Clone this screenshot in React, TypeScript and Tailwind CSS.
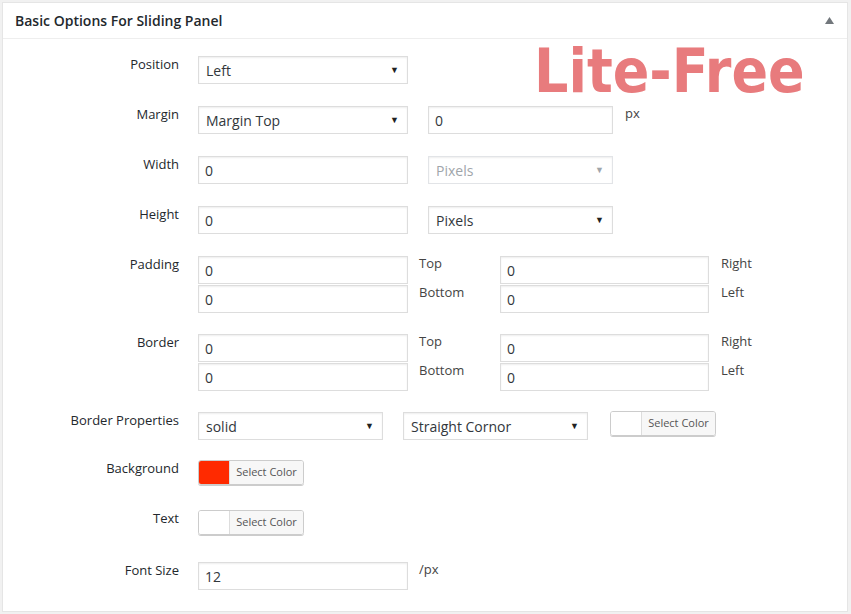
import React from 'react';

const font = { fontFamily: '"Open Sans", "Noto Sans", sans-serif' };

// ── small controls ────────────────────────────────────────────────────────────
function Select({ value, width, disabled }: { value: string; width: string; disabled?: boolean }) {
  return (
    <div
      className={`${width} h-[28px] flex items-center justify-between pl-[7px] pr-[8px] border bg-white text-[14px] shadow-[inset_0_1px_2px_rgba(0,0,0,0.07)] ${
        disabled ? 'border-[#e2e4e7] text-[#a0a5aa]' : 'border-[#dddddd] text-[#32373c]'
      }`}
    >
      <span>{value}</span>
      <span className={`text-[9px] ${disabled ? 'text-[#a0a5aa]' : 'text-[#222]'}`}>▼</span>
    </div>
  );
}

function Input({ value, width }: { value: string; width: string }) {
  return (
    <div
      className={`${width} h-[28px] flex items-center pl-[6px] border border-[#dddddd] bg-white text-[14px] text-[#32373c] shadow-[inset_0_1px_2px_rgba(0,0,0,0.07)]`}
    >
      {value}
    </div>
  );
}

function ColorButton({ color }: { color: string }) {
  return (
    <div className="w-[106px] h-[25px] flex border border-[#cccccc] rounded-[3px] overflow-hidden shadow-[0_1px_0_#cccccc]">
      <span className="w-[30px] h-full" style={{ background: color }} />
      <span className="flex-1 flex items-center justify-center bg-[#f7f7f7] border-l border-[#dddddd] text-[11px] text-[#555]">
        Select Color
      </span>
    </div>
  );
}

function Side({ children }: { children: React.ReactNode }) {
  return <span className="block text-[13px] text-[#444] leading-[18px] -mt-[2px]">{children}</span>;
}

function Row({ label, h, children }: { label: string; h: string; children: React.ReactNode }) {
  return (
    <div className={`flex ${h}`}>
      <div className="w-[176px] text-right text-[13px] text-[#23282d] -mt-[1px] leading-[18px]">{label}</div>
      <div className="ml-[19px]">{children}</div>
    </div>
  );
}

// four-sided block (padding / border)
function SidesBlock() {
  return (
    <div className="flex flex-col gap-[1px]">
      {[['Top', 'Right'], ['Bottom', 'Left']].map(([a, b]) => (
        <div key={a} className="flex">
          <Input value="0" width="w-[210px]" />
          <div className="w-[92px] pl-[11px]">
            <Side>{a}</Side>
          </div>
          <Input value="0" width="w-[209px]" />
          <div className="pl-[12px]">
            <Side>{b}</Side>
          </div>
        </div>
      ))}
    </div>
  );
}

// ── main ──────────────────────────────────────────────────────────────────────
export default function App() {
  return (
    <div className="w-[851px] h-[614px] bg-[#f1f1f1] pt-[2px] pl-[2px]" style={font}>
      <div className="relative w-[846px] h-[610px] bg-white border border-[#e5e5e5]">
        {/* header */}
        <div className="h-[36px] flex items-center justify-between pl-[12px] pr-[12px] border-b border-[#eeeeee]">
          <span className="text-[14px] font-semibold text-[#23282d]">Basic Options For Sliding Panel</span>
          <svg width="9" height="7" viewBox="0 0 9 7" className="mr-[1px]">
            <path d="M4.5 0 L9 7 L0 7 Z" fill="#72777c" />
          </svg>
        </div>

        {/* watermark */}
        <span
          className="absolute left-[531px] top-[44px] text-[60px] font-bold font-stretch-condensed text-[#e87b7d] leading-[48px]"
          style={{ fontFamily: '"DejaVu Sans Condensed", "DejaVu Sans", Verdana, sans-serif' }}
        >
          Lite-Free
        </span>

        <div className="relative pt-[17px]">
          <Row label="Position" h="h-[50px]">
            <Select value="Left" width="w-[210px]" />
          </Row>
          <Row label="Margin" h="h-[50px]">
            <div className="flex">
              <Select value="Margin Top" width="w-[210px]" />
              <div className="ml-[20px]">
                <Input value="0" width="w-[185px]" />
              </div>
              <div className="pl-[12px]">
                <Side>px</Side>
              </div>
            </div>
          </Row>
          <Row label="Width" h="h-[50px]">
            <div className="flex gap-[20px]">
              <Input value="0" width="w-[210px]" />
              <Select value="Pixels" width="w-[185px]" disabled />
            </div>
          </Row>
          <Row label="Height" h="h-[50px]">
            <div className="flex gap-[20px]">
              <Input value="0" width="w-[210px]" />
              <Select value="Pixels" width="w-[185px]" />
            </div>
          </Row>
          <Row label="Padding" h="h-[78px]">
            <SidesBlock />
          </Row>
          <Row label="Border" h="h-[78px]">
            <SidesBlock />
          </Row>
          <Row label="Border Properties" h="h-[48px]">
            <div className="flex">
              <Select value="solid" width="w-[185px]" />
              <div className="ml-[20px]">
                <Select value="Straight Cornor" width="w-[185px]" />
              </div>
              <div className="ml-[22px] -mt-[1px]">
                <ColorButton color="#ffffff" />
              </div>
            </div>
          </Row>
          <Row label="Background" h="h-[50px]">
            <ColorButton color="#ff2a00" />
          </Row>
          <Row label="Text" h="h-[52px]">
            <ColorButton color="#ffffff" />
          </Row>
          <Row label="Font Size" h="h-[40px]">
            <div className="flex">
              <Input value="12" width="w-[210px]" />
              <div className="pl-[11px]">
                <Side>/px</Side>
              </div>
            </div>
          </Row>
        </div>
      </div>
    </div>
  );
}
